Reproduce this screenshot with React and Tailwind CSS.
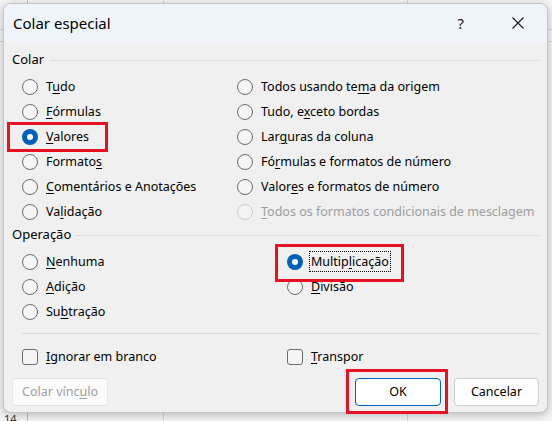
import React from "react";

// Small helper: underline one letter (access key) of a label
function Label({ text, u, className = "" }) {
  if (u === undefined || u < 0) return <span className={className}>{text}</span>;
  return (
    <span className={className}>
      {text.slice(0, u)}
      <span className="underline underline-offset-2">{text[u]}</span>
      {text.slice(u + 1)}
    </span>
  );
}

function Radio({ text, u, checked, disabled, focus }) {
  return (
    <div className="flex h-[25px] items-center whitespace-nowrap">
      <span
        className={
          "flex h-4 w-4 shrink-0 items-center justify-center rounded-full " +
          (checked
            ? "bg-[#005fb8]"
            : disabled
            ? "border border-[#cfcfcf] bg-[#f3f3f3]"
            : "border border-[#6b6b6b] bg-[#f5f5f5]")
        }
      >
        {checked && <span className="h-[6px] w-[6px] rounded-full bg-white" />}
      </span>
      <span
        className={
          "ml-[7px] px-px leading-[19px] " +
          (focus ? "outline-1 outline-dotted outline-black outline-offset-0" : "") +
          (disabled ? " text-[#9d9d9d]" : " text-black")
        }
      >
        <Label text={text} u={u} />
      </span>
    </div>
  );
}

function Checkbox({ text, u }) {
  return (
    <div className="flex h-6 items-center whitespace-nowrap">
      <span className="h-4 w-4 shrink-0 rounded-[3px] border border-[#6b6b6b] bg-[#f5f5f5]" />
      <span className="ml-[8px] text-black">
        <Label text={text} u={u} />
      </span>
    </div>
  );
}

function GroupTitle({ children, gap }) {
  return (
    <div className="flex h-5 items-center pr-[8px]">
      <span className="text-[13px] text-black">{children}</span>
      <span className={"h-px flex-1 bg-[#dadada] " + gap} />
    </div>
  );
}

export default function App() {
  return (
    <div
      className="relative h-[421px] w-[552px] overflow-hidden bg-[#f4f4f4] text-[12.5px]"
      style={{ fontFamily: '"Noto Sans", "Open Sans", sans-serif' }}
    >
      {/* spreadsheet behind the dialog */}
      <div className="absolute left-[163px] top-0 h-[421px] w-px bg-[#d4d4d4]" />
      <div className="absolute left-[407px] top-0 h-[421px] w-px bg-[#d4d4d4]" />
      <div className="absolute left-0 top-[29px] h-px w-[552px] bg-[#d4d4d4]" />
      <div className="absolute left-0 top-[41px] h-px w-[552px] bg-[#d4d4d4]" />
      <div className="absolute left-[27px] top-0 h-[421px] w-px bg-[#bdbdbd]" />
      <div className="absolute left-[4px] top-[413px] text-[11px] leading-[12px] text-[#333]">14</div>

      {/* dialog */}
      <div className="relative ml-[3px] mt-[3px] flex h-[410px] w-[545px] flex-col overflow-hidden rounded-[8px] border border-[#c6c6c6] bg-[#f0f0f0] shadow-[0_2px_8px_rgba(0,0,0,0.25)]">
        <div className="flex h-[38px] shrink-0 items-center bg-[#eef4f9] pl-[9px]">
          <span className="text-[15px] text-black">Colar especial</span>
          <span className="ml-auto mr-[48px] text-[15px] text-[#1a1a1a]">?</span>
          <svg width="12" height="12" viewBox="0 0 12 12" className="mr-[23px]">
            <path d="M0.5 0.5 L11.5 11.5 M11.5 0.5 L0.5 11.5" stroke="#1a1a1a" strokeWidth="1.1" />
          </svg>
        </div>

        <div className="flex flex-1 flex-col pl-[8px]">
          <div className="mt-[8px]">
            <GroupTitle gap="ml-[6px]">Colar</GroupTitle>
          </div>
          <div className="mt-[4px] grid grid-cols-[215px_1fr] pl-[10px]">
            <div>
              <Radio text="Tudo" u={1} />
              <Radio text="Fórmulas" u={0} />
              <Radio text="Valores" u={0} checked />
              <Radio text="Formatos" u={7} />
              <Radio text="Comentários e Anotações" u={0} />
              <Radio text="Validação" u={2} />
            </div>
            <div>
              <Radio text="Todos usando tema da origem" u={15} />
              <Radio text="Tudo, exceto bordas" u={7} />
              <Radio text="Larguras da coluna" u={3} />
              <Radio text="Fórmulas e formatos de número" u={2} />
              <Radio text="Valores e formatos de número" u={5} />
              <Radio text="Todos os formatos condicionais de mesclagem" u={0} disabled />
            </div>
          </div>

          <div className="mt-[1px]">
            <GroupTitle gap="ml-[5px]">Operação</GroupTitle>
          </div>
          <div className="mt-[4px] grid grid-cols-[265px_1fr] pl-[10px]">
            <div>
              <Radio text="Nenhuma" u={0} />
              <Radio text="Adição" u={0} />
              <Radio text="Subtração" u={2} />
            </div>
            <div>
              <Radio text="Multiplicação" u={6} checked focus />
              <Radio text="Divisão" u={0} />
            </div>
          </div>

          <div className="ml-[10px] mr-[8px] mt-[9px] h-px bg-[#dadada]" />

          <div className="mt-[11px] grid grid-cols-[265px_1fr] pl-[10px]">
            <Checkbox text="Ignorar em branco" u={0} />
            <Checkbox text="Transpor" u={0} />
          </div>

          <div className="mt-[9px] flex items-center pr-[8px]">
            <button className="h-[28px] w-[96px] rounded-[4px] border border-[#e3e3e3] bg-[#fbfbfb] text-[#a0a0a0]">
              <Label text="Colar vínculo" u={10} />
            </button>
            <button className="ml-auto h-[28px] w-[86px] rounded-[4px] border border-[#0067c0] bg-white text-black">
              OK
            </button>
            <button className="ml-[13px] h-[28px] w-[85px] rounded-[4px] border border-[#d0d0d0] bg-[#fdfdfd] text-black">
              Cancelar
            </button>
          </div>
        </div>
      </div>

      {/* red annotation boxes */}
      <div className="absolute left-[7px] top-[122px] h-[30px] w-[101px] border-[3px] border-[#e81123]" />
      <div className="absolute left-[275px] top-[244px] h-[38px] w-[129px] border-[3px] border-[#e81123]" />
      <div className="absolute left-[346px] top-[369px] h-[45px] w-[102px] border-[3px] border-[#e81123]" />
    </div>
  );
}
